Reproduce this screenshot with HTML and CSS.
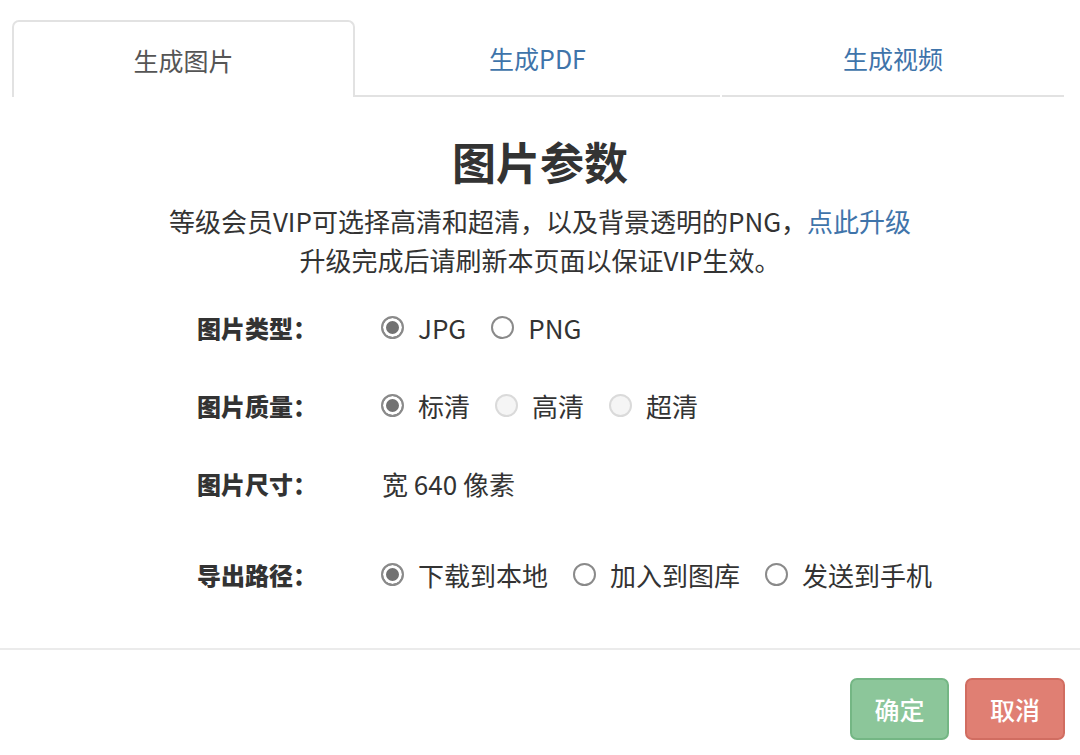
FILE: index.html
```html
<!DOCTYPE html>
<html lang="zh-CN">
<head>
<meta charset="utf-8">
<title>图片参数</title>
<link rel="stylesheet" href="styles.css">
</head>
<body>
<div class="tabs">
  <div class="tab tab-active">生成图片</div>
  <div class="tab tab-mid">生成PDF</div>
  <div class="tab tab-last">生成视频</div>
</div>
<div class="content">
  <h1 class="title">图片参数</h1>
  <p class="desc">等级会员VIP可选择高清和超清，以及背景透明的PNG，<span class="link">点此升级</span><br>升级完成后请刷新本页面以保证VIP生效。</p>
  <div class="form">
    <div class="row">
      <div class="label">图片类型：</div>
      <div class="value">
        <label class="opt"><input type="radio" name="type" checked><span>JPG</span></label>
        <label class="opt"><input type="radio" name="type"><span>PNG</span></label>
      </div>
    </div>
    <div class="row">
      <div class="label">图片质量：</div>
      <div class="value">
        <label class="opt"><input type="radio" name="q" checked><span>标清</span></label>
        <label class="opt"><input type="radio" name="q" disabled><span>高清</span></label>
        <label class="opt"><input type="radio" name="q" disabled><span>超清</span></label>
      </div>
    </div>
    <div class="row">
      <div class="label">图片尺寸：</div>
      <div class="value size">宽 640 像素</div>
    </div>
    <div class="row row-last">
      <div class="label">导出路径：</div>
      <div class="value">
        <label class="opt"><input type="radio" name="p" checked><span>下载到本地</span></label>
        <label class="opt"><input type="radio" name="p"><span>加入到图库</span></label>
        <label class="opt"><input type="radio" name="p"><span>发送到手机</span></label>
      </div>
    </div>
  </div>
</div>
<div class="footer">
  <button class="btn btn-ok">确定</button>
  <button class="btn btn-cancel">取消</button>
</div>
</body>
</html>
```

FILE: styles.css
```css
html, body {
  margin: 0;
  padding: 0;
  background: #fff;
}
body {
  font-family: "Noto Sans CJK SC", "Noto Sans", sans-serif;
  color: #333;
  width: 1080px;
  height: 755px;
  overflow: hidden;
}
.tabs {
  display: flex;
  margin: 20px 0 0 12px;
  height: 77px;
}
.tab {
  box-sizing: border-box;
  height: 77px;
  display: flex;
  align-items: center;
  justify-content: center;
  padding-top: 0;
  font-size: 25px;
  color: #3f74aa;
  border-bottom: 2px solid #e2e2e2;
}
.tab-active {
  width: 343px;
  color: #555;
  border: 2px solid #e2e2e2;
  border-bottom: none;
  border-radius: 7px 7px 0 0;
}
.tab-mid {
  width: 365px;
  margin-right: 2px;
}
.tab-last {
  width: 342px;
}
.content {
  text-align: center;
}
.title {
  margin: 34px 0 0;
  font-size: 44px;
  line-height: 60px;
  font-weight: bold;
  color: #333;
}
.desc {
  margin: 10px 0 0;
  font-size: 26px;
  line-height: 39px;
  color: #333;
}
.link {
  color: #3f74aa;
}
.form {
  margin: 9px 0 0 197px;
  text-align: left;
}
.row {
  display: flex;
  align-items: center;
  height: 78px;
}
.row-last {
  margin-top: 13px;
}
.label {
  width: 184px;
  font-size: 24px;
  font-weight: 900;
  color: #333;
}
.value {
  display: flex;
  align-items: center;
  font-size: 26px;
  color: #333;
}
.size {
  padding-left: 1px;
}
.opt {
  display: flex;
  align-items: center;
  margin-right: 25px;
}
.opt input {
  appearance: none;
  -webkit-appearance: none;
  box-sizing: border-box;
  width: 23px;
  height: 23px;
  margin: 0 14px 0 0;
  border: 2px solid #8a8a8a;
  border-radius: 50%;
  background: #fff;
}
.opt input:checked {
  background: #727272;
  box-shadow: inset 0 0 0 3px #fff;
}
.opt input:disabled {
  border-color: #dadada;
  background: #f5f5f5;
}
.footer {
  margin-top: 35px;
  border-top: 2px solid #ebebeb;
  display: flex;
  justify-content: flex-end;
  gap: 16px;
  padding: 28px 15px 0 0;
}
.btn {
  box-sizing: border-box;
  width: 99px;
  height: 62px;
  border-radius: 7px;
  font-family: "Noto Sans CJK SC", sans-serif;
  font-size: 25px;
  font-weight: 500;
  color: #fff;
  padding: 0;
}
.btn-ok {
  background: #8cc69a;
  border: 2px solid #74b684;
}
.btn-cancel {
  width: 100px;
  background: #e07f73;
  border: 2px solid #d16d61;
}
```
